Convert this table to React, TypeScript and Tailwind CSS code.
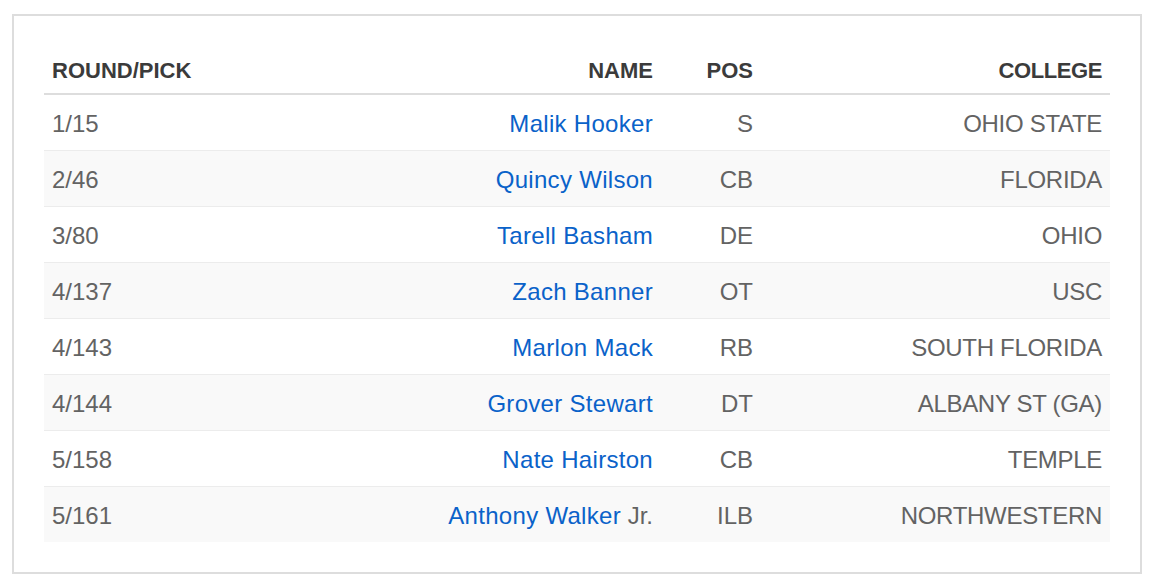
import React from "react";

interface Pick {
  pick: string,
  name: string,
  suffix?: string,
  pos: string,
  college: string
}

const picks: Pick[] = [
  { pick: "1/15", name: "Malik Hooker", pos: "S", college: "OHIO STATE" },
  { pick: "2/46", name: "Quincy Wilson", pos: "CB", college: "FLORIDA" },
  { pick: "3/80", name: "Tarell Basham", pos: "DE", college: "OHIO" },
  { pick: "4/137", name: "Zach Banner", pos: "OT", college: "USC" },
  { pick: "4/143", name: "Marlon Mack", pos: "RB", college: "SOUTH FLORIDA" },
  { pick: "4/144", name: "Grover Stewart", pos: "DT", college: "ALBANY ST (GA)" },
  { pick: "5/158", name: "Nate Hairston", pos: "CB", college: "TEMPLE" },
  { pick: "5/161", name: "Anthony Walker", suffix: "Jr.", pos: "ILB", college: "NORTHWESTERN" },
];

export default function App() {
  return (
    <div className="min-h-screen bg-white pt-[14px] pl-[12px] pr-[14px] pb-[14px] font-['Liberation_Sans',Arial,sans-serif]">
      <div className="border-2 border-[#dddddd] px-[30px] py-[30px]">
        <table className="w-full table-fixed border-collapse">
          <colgroup>
            <col className="w-[300px]" />
            <col className="w-[317px]" />
            <col className="w-[100px]" />
            <col className="w-[349px]" />
          </colgroup>
          <thead>
            <tr className="h-[48px] border-b-2 border-[#dddddd] text-[22px] font-bold uppercase text-[#3b3b3b]">
              <th className="px-2 pt-[2px] text-left font-bold">Round/Pick</th>
              <th className="px-2 pt-[2px] text-right font-bold">Name</th>
              <th className="px-2 pt-[2px] text-right font-bold">Pos</th>
              <th className="px-2 pt-[2px] text-right font-bold tracking-[-0.4px]">College</th>
            </tr>
          </thead>
          <tbody className="text-[24px] text-[#636363]">
            {picks.map((p, i) => (
              <tr
                key={p.pick}
                className={`h-[56px] ${i > 0 ? "border-t border-[#ececec]" : ""} ${i % 2 === 1 ? "bg-[#f9f9f9]" : "bg-white"}`}
              >
                <td className="px-2 pt-[3px] text-left">{p.pick}</td>
                <td className="px-2 pt-[3px] text-right whitespace-nowrap">
                  <a href="#" className="text-[#0a62c9] tracking-[0.3px]">{p.name}</a>
                  {p.suffix ? <span> {p.suffix}</span> : null}
                </td>
                <td className="px-2 pt-[3px] text-right">{p.pos}</td>
                <td className="px-2 pt-[3px] text-right tracking-[-0.3px]">{p.college}</td>
              </tr>
            ))}
          </tbody>
        </table>
      </div>
    </div>
  );
}
